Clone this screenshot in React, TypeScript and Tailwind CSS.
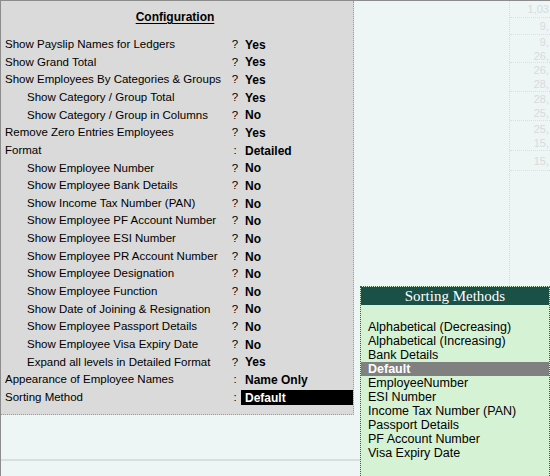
const ROWS = [
  { label: "Show Payslip Names for Ledgers", sym: "?", value: "Yes" },
  { label: "Show Grand Total", sym: "?", value: "Yes" },
  { label: "Show Employees By Categories & Groups", sym: "?", value: "Yes" },
  { label: "Show Category / Group Total", sym: "?", value: "Yes", indent: true },
  { label: "Show Category / Group in Columns", sym: "?", value: "No", indent: true },
  { label: "Remove Zero Entries Employees", sym: "?", value: "Yes" },
  { label: "Format", sym: ":", value: "Detailed" },
  { label: "Show Employee Number", sym: "?", value: "No", indent: true },
  { label: "Show Employee Bank Details", sym: "?", value: "No", indent: true },
  { label: "Show Income Tax Number (PAN)", sym: "?", value: "No", indent: true },
  { label: "Show Employee PF Account Number", sym: "?", value: "No", indent: true },
  { label: "Show Employee ESI Number", sym: "?", value: "No", indent: true },
  { label: "Show Employee PR Account Number", sym: "?", value: "No", indent: true },
  { label: "Show Employee Designation", sym: "?", value: "No", indent: true },
  { label: "Show Employee Function", sym: "?", value: "No", indent: true },
  { label: "Show Date of Joining & Resignation", sym: "?", value: "No", indent: true },
  { label: "Show Employee Passport Details", sym: "?", value: "No", indent: true },
  { label: "Show Employee Visa Expiry Date", sym: "?", value: "No", indent: true },
  { label: "Expand all levels in Detailed Format", sym: "?", value: "Yes", indent: true },
  { label: "Appearance of Employee Names", sym: ":", value: "Name Only" },
  { label: "Sorting Method", sym: ":", value: "Default", active: true },
];

const NUMBER_GROUPS = [
  { h: "h-[17px]", items: ["1,03"] },
  { h: "h-[17px]", items: ["9,"] },
  { h: "h-[28px]", items: ["9,", "26,"] },
  { h: "h-[29px]", items: ["26,", "28,"] },
  { h: "h-[29px]", items: ["28,", "25,"] },
  { h: "h-[30px]", items: ["25,", "15,"] },
  { h: "h-[20px]", items: ["15,"] },
];

const METHODS = [
  "Alphabetical (Decreasing)",
  "Alphabetical (Increasing)",
  "Bank Details",
  "Default",
  "EmployeeNumber",
  "ESI Number",
  "Income Tax Number (PAN)",
  "Passport Details",
  "PF Account Number",
  "Visa Expiry Date",
];

export default function App(): React.ReactElement {
  return (
    <div className="relative flex h-[476px] w-[550px] overflow-hidden border-l border-t border-[#8c8c8c] bg-[#edf5f5] font-['Liberation_Sans',Arial,sans-serif] text-[11.5px] text-black">
      <div className="flex w-[509px] flex-col">
        <div className="h-[414px] w-[353px] border-b border-r border-dotted border-[#9a9a9a] bg-[#dadada] pl-[4px] pt-[7px]">
          <div className="flex h-[18px] items-center justify-center pr-[8px] text-[12px] font-bold underline underline-offset-2">
            Configuration
          </div>
          <div className="mt-[10px]">
            {ROWS.map((r) => (
              <div key={r.label} className="flex h-[17.65px] items-center leading-none">
                <div className={`w-[224px] whitespace-nowrap ${r.indent ? "pl-[22px]" : ""}`}>{r.label}</div>
                <div className="w-[12px] text-center">{r.sym}</div>
                <div
                  className={`flex h-[15px] w-[112px] items-center pl-[4px] text-[12px] font-bold ${
                    r.active ? "bg-black text-white" : ""
                  }`}
                >
                  {r.value}
                </div>
              </div>
            ))}
          </div>
        </div>
        <div className="mt-[44px] w-[360px] border-t-2 border-[#d8dede]" />
      </div>

      <div className="flex w-[41px] flex-col border-l border-dotted border-[#d6dada] text-[11px] leading-[14px] text-[#d8dbdb]">
        {NUMBER_GROUPS.map((g, i) => (
          <div
            key={i}
            className={`${g.h} flex flex-col justify-center border-b border-dotted border-[#dadede] pr-[1px] text-right`}
          >
            {g.items.map((n, j) => (
              <div key={j}>{n}</div>
            ))}
          </div>
        ))}
      </div>

      <div className="absolute left-[359px] top-[285px] h-[192px] w-[190px] border border-dotted border-[#3d5c55] bg-[#d5f2d5] text-[12.5px]">
        <div className="flex h-[18px] items-center justify-center bg-[#1a5046] font-['Liberation_Serif','Times_New_Roman',serif] text-[15px] text-white">
          Sorting Methods
        </div>
        <div className="pt-[15px]">
          {METHODS.map((m) =>
            m === "Default" ? (
              <div key={m} className="flex h-[14px] items-center bg-[#808080] pl-[7px] font-bold text-white">
                {m}
              </div>
            ) : (
              <div key={m} className="flex h-[14px] items-center pl-[7px]">
                {m}
              </div>
            )
          )}
        </div>
      </div>
    </div>
  );
}
